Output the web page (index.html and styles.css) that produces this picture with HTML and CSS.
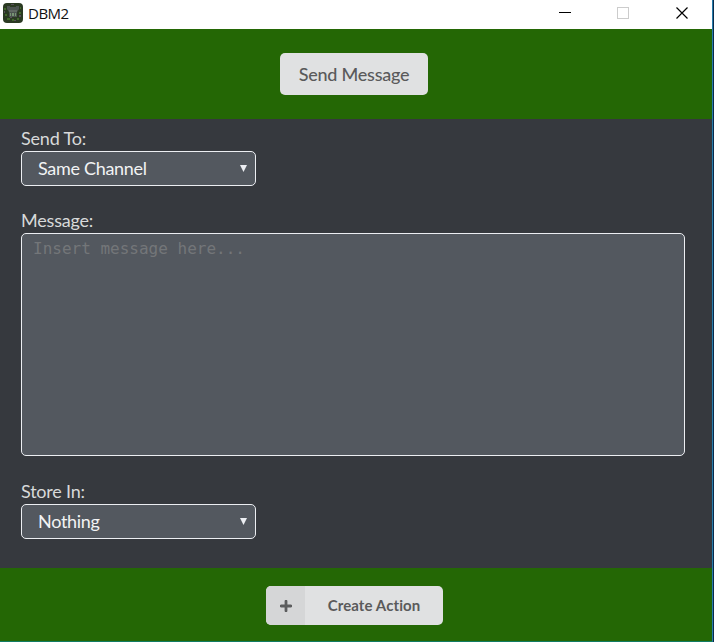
FILE: index.html
```html
<!DOCTYPE html>
<html lang="en">
<head>
<meta charset="utf-8">
<title>DBM2</title>
<link rel="stylesheet" href="styles.css">
</head>
<body>
<div class="window">
  <header class="titlebar">
    <svg class="app-icon" width="20" height="20" viewBox="0 0 20 20">
      <rect width="20" height="20" rx="4" fill="#2b3a23"/>
      <path d="M4 3h3v1h6V3h3v3l-2 3v5H6V9L4 6z" fill="#4c5450"/>
      <path d="M6 7h8v2H6z" fill="#606862"/>
      <path d="M7 10h1v3H7zM9 10h2v3H9zM12 10h1v3h-1z" fill="#789374"/>
      <path d="M1 5h2v2H1zM2 11h2v2H2zM4 15h3v2H4zM9 16h2v2H9zM14 15h2v2h-2zM16 9h2v2h-2zM17 4h1v2h-1z" fill="#426a2b"/>
      <path d="M1 8h1v2H1zM7 14h2v1H7zM16 12h2v2h-2zM11 17h2v1h-2zM8 1h3v1H8z" fill="#59505a"/>
    </svg>
    <span class="app-name">DBM2</span>
    <svg class="controls" width="130" height="14" viewBox="0 0 130 14" fill="none" shape-rendering="crispEdges">
      <path d="M0 6.5h12" stroke="#000"/>
      <rect x="58.5" y="1.5" width="11" height="11" stroke="#ccc"/>
      <path d="M117.5 1.5l11 11M128.500 1.5l-11 11" stroke="#000" stroke-width="1.2" shape-rendering="auto"/>
    </svg>
  </header>
  <div class="band top"><button class="title-button">Send Message</button></div>
  <main class="form">
    <div class="label">Send To:</div>
    <div class="select"><span>Same Channel</span><i class="arrow"></i></div>
    <div class="label message">Message:</div>
    <textarea placeholder="Insert message here..."></textarea>
    <div class="label store">Store In:</div>
    <div class="select"><span>Nothing</span><i class="arrow"></i></div>
  </main>
  <footer class="band bottom">
    <button class="create">
      <span class="plus"><svg width="12" height="12" viewBox="0 0 12 12"><path d="M6 1.200v9.600M1.200 6h9.600" stroke="#5c5d5e" stroke-width="2.800" stroke-linecap="round"/></svg></span>
      <span class="create-text">Create Action</span>
    </button>
  </footer>
</div>
</body>
</html>
```
FILE: styles.css
```css
* { box-sizing: border-box; }
body { margin: 0; background: #082b4c; font-family: Lato, sans-serif; }
.window { width: 713px; height: 642px; border-right: 1px solid #287caa; border-bottom: 1px solid #117d62; overflow: hidden; }
.titlebar { height: 29px; background: #fff; display: flex; align-items: center; padding: 0 23px 3px 3px; }
.app-name { font: 15px/20px "Open Sans", sans-serif; color: #111; margin-left: 5px; letter-spacing: -0.5px; }
.controls { margin-left: auto; }
.band { background: #246705; display: flex; justify-content: center; }
.top { height: 90px; padding: 24px 4px 0 0; }
button { border: 0; padding: 0; border-radius: 5px; background: #e0e1e2; color: #5a5a5b; font-family: inherit; }
.title-button { width: 148px; height: 42px; font-size: 18px; font-weight: 500; letter-spacing: -0.25px; }
.form { height: 448px; background: #36393e; padding: 9px 27px 0 21px; }
.form { height: 449px; }
.label { height: 23px; font-size: 18px; line-height: 20px; letter-spacing: -0.2px; color: #d8d9da; }
.select { width: 235px; height: 35px; border: 1px solid #eceef2; border-radius: 5px; background: #53585f; color: #f2f3f4; font-size: 18px; line-height: 33px; letter-spacing: -0.3px; padding: 0 8px 0 16px; display: flex; justify-content: space-between; align-items: center; }
.arrow { width: 7px; height: 7px; background: #eceef2; clip-path: polygon(0 0, 100% 0, 50% 100%); }
.message { margin-top: 24px; }
textarea { display: block; width: 664px; height: 223px; margin: 0; resize: none; border: 1px solid #eceef2; border-radius: 5px; background: #53585f; padding: 5px 11px; font: 16px/20px "DejaVu Sans Mono", monospace; color: #eee; }
textarea::placeholder { color: #737679; opacity: 1; }
.store { margin-top: 25px; }
.bottom { height: 73px; padding: 18px 3px 0 0; }
.create { width: 177px; height: 39px; display: flex; overflow: hidden; font-size: 15px; font-weight: 700; letter-spacing: 0.1px; }
.plus { width: 39px; height: 39px; background: #d5d6d7; display: flex; align-items: center; justify-content: center; }
.create-text { flex: 1; line-height: 39px; }
```
